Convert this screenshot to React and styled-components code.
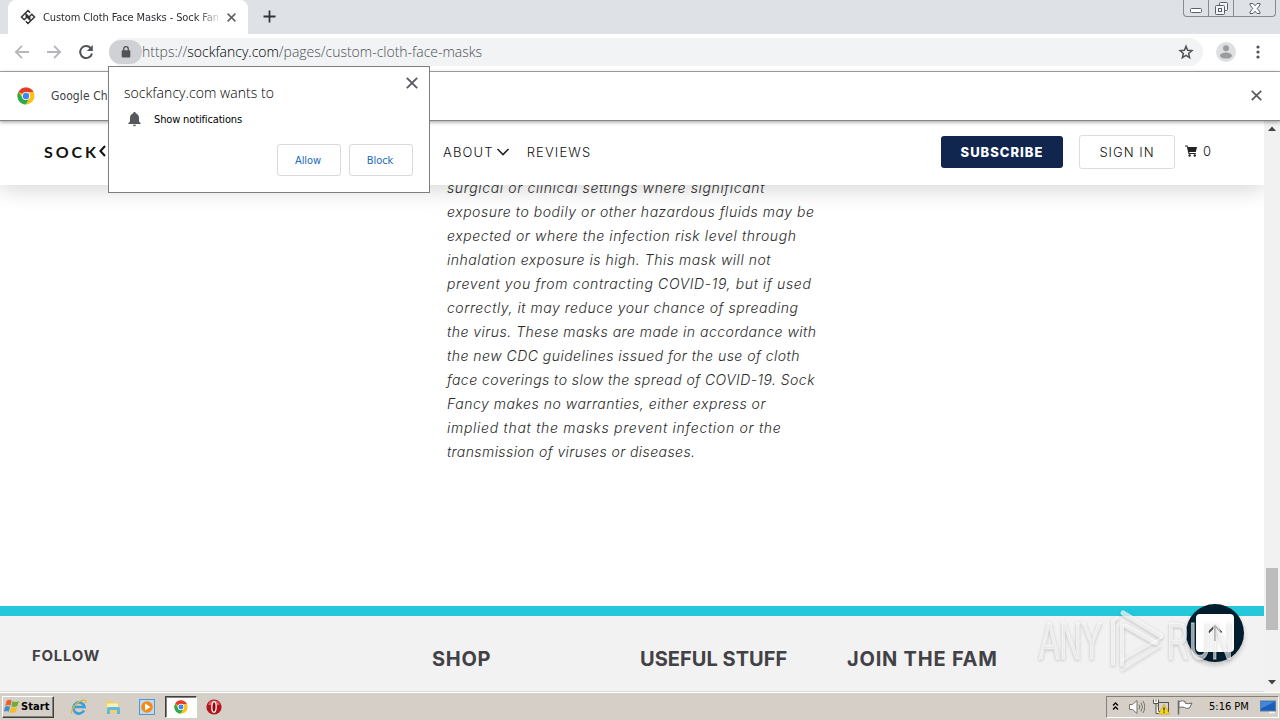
import React from 'react';
import styled, { createGlobalStyle } from 'styled-components';

const GlobalStyle = createGlobalStyle`
  * {
    box-sizing: border-box;
  }

  body {
    margin: 0;
    background: #fff;
    overflow: hidden;
  }

  svg {
    display: block;
    flex-shrink: 0;
  }
`;

const uiFont = '"DejaVu Sans Condensed", "DejaVu Sans", sans-serif';
const thinFont = '"Open Sans", sans-serif';
const siteFont = 'Inter, sans-serif';

const Screen = styled.div`
  position: relative;
  width: 1280px;
  height: 720px;
  display: grid;
  grid-template-rows: 34px 38px 49px 571px 28px;
  overflow: hidden;
  font-family: ${uiFont};
  white-space: nowrap;
`;

const TabStrip = styled.div`
  display: flex;
  align-items: flex-start;
  padding-left: 8px;
  background: #dee1e6;
`;

const Tab = styled.div`
  width: 240px;
  height: 34px;
  display: flex;
  align-items: center;
  padding: 0 11px 0 12px;
  background: #fff;
  border-radius: 8px 8px 0 0;
`;

const TabTitle = styled.div`
  width: 175px;
  margin-left: 7px;
  overflow: hidden;
  font-size: 11px;
  letter-spacing: -0.108px;
  color: #2c2f33;
  mask-image: linear-gradient(90deg, #000 154px, transparent 180px);
`;

const TabClose = styled.div`
  margin-left: 9px;
`;

const NewTab = styled.div`
  margin: 10px 0 0 15px;
`;

const WindowButtons = styled.div`
  display: flex;
  height: 17px;
  margin: 0 4px 0 auto;
  border: 1px solid #858a93;
  border-top: none;
  border-radius: 0 0 4px 4px;
`;

const WindowButton = styled.div`
  width: ${({ $width }) => $width}px;
  display: flex;
  align-items: center;
  justify-content: center;

  & + & {
    border-left: 1px solid #858a93;
  }
`;

const Toolbar = styled.div`
  display: flex;
  align-items: center;
  padding: 0 20px 1px 13px;
  background: #fff;
  border-bottom: 1px solid #a9a9ab;
`;

const NavIcons = styled.div`
  display: flex;
  gap: 14px;
  margin-right: 14px;
`;

const Omnibox = styled.div`
  flex: 1;
  height: 28px;
  display: flex;
  align-items: center;
  padding-right: 9px;
  background: #f1f3f4;
  border-radius: 14px;
`;

const LockPill = styled.div`
  width: 33px;
  height: 24px;
  display: flex;
  align-items: center;
  justify-content: center;
  background: #cfd1d4;
  border-radius: 12px;
`;

const Url = styled.div`
  flex: 1;
  padding-bottom: 2px;
  font: 300 14px ${thinFont};
  letter-spacing: -0.011px;
  color: #4c5054;

  span {
    color: #000;
  }
`;

const ToolbarIcon = styled.div`
  margin-left: ${({ $gap }) => $gap}px;
`;

const InfoBar = styled.div`
  position: relative;
  z-index: 3;
  display: flex;
  align-items: center;
  padding: 0 18px 1px 17px;
  background: #fff;
  border-bottom: 1px solid #858585;
  box-shadow: 0 1px 4px rgba(0, 0, 0, 0.4);
`;

const InfoText = styled.div`
  flex: 1;
  margin-left: 16px;
  font-size: 12px;
  letter-spacing: 0.1px;
  color: #3c4043;
`;

const Viewport = styled.div`
  display: grid;
  grid-template-columns: 1264px 16px;
  overflow: hidden;
`;

const Page = styled.div`
  display: flex;
  flex-direction: column;
  overflow: hidden;
  font-family: ${siteFont};
`;

const SiteHeader = styled.header`
  position: relative;
  z-index: 2;
  height: 64px;
  flex-shrink: 0;
  display: flex;
  align-items: center;
  padding: 0 53px 2px 44px;
  background: #fff;
  box-shadow: 0 4px 22px rgba(0, 0, 0, 0.17);
  color: #111;
`;

const Brand = styled.div`
  width: 399px;
  display: flex;
  align-items: center;
  padding-bottom: 2px;
  font: 700 16px Lato, sans-serif;
  letter-spacing: 2.9px;
  color: #111;
`;

const NavLink = styled.div`
  display: flex;
  align-items: center;
  margin-right: 17px;
  padding-bottom: 1px;
  font-size: 13px;
  font-weight: 300;
  letter-spacing: 1.15px;

  svg {
    margin-left: 2px;
  }
`;

const HeaderActions = styled.div`
  display: flex;
  align-items: center;
  margin-left: auto;
`;

const SiteButton = styled.div`
  width: ${({ $primary }) => ($primary ? 122 : 96)}px;
  height: ${({ $primary }) => ($primary ? 32 : 34)}px;
  display: flex;
  align-items: center;
  justify-content: center;
  margin-right: ${({ $primary }) => ($primary ? 16 : 10)}px;
  padding-bottom: 1px;
  font-size: 13px;
  font-weight: ${({ $primary }) => ($primary ? 800 : 300)};
  letter-spacing: 1px;
  color: ${({ $primary }) => ($primary ? '#fff' : '#111')};
  background: ${({ $primary }) => ($primary ? '#10264f' : '#fff')};
  border: ${({ $primary }) => ($primary ? 'none' : '1px solid #dcdde0')};
  border-radius: 3px;
`;

const Cart = styled.div`
  display: flex;
  align-items: center;
  gap: 6px;
  padding-bottom: 3px;
  font-size: 13px;
  font-weight: 300;
`;

const Article = styled.article`
  height: 430px;
  flex-shrink: 0;
  margin-top: -9px;
  padding-left: 447px;
  font-size: 14px;
  font-style: italic;
  font-weight: 300;
  line-height: 24px;
  color: #2a2a2a;
`;

const Line = styled.div`
  letter-spacing: ${({ $spacing }) => $spacing}px;
`;

const Footer = styled.footer`
  height: 86px;
  flex-shrink: 0;
  display: grid;
  grid-template-columns: 400px 208px 207px 1fr;
  align-items: center;
  padding: 4px 0 0 32px;
  background: #f2f2f2;
  border-top: 10px solid #25c8da;
  border-bottom: 1px solid #deddd8;
`;

const FooterHeading = styled.div`
  padding-top: ${({ $small }) => ($small ? 0 : 7)}px;
  font-family: ${siteFont};
  font-size: ${({ $small }) => ($small ? 15 : 20)}px;
  font-weight: 700;
  letter-spacing: ${({ $spacing }) => $spacing}px;
  color: #424246;
`;

const ScrollTrack = styled.div`
  display: flex;
  flex-direction: column;
  align-items: center;
  padding: 5px 0 7px;
  background: #f1f1f1;
`;

const ScrollThumb = styled.div`
  width: 12px;
  height: 62px;
  margin: auto 0 50px;
  background: #bcbcbc;
`;

const Prompt = styled.div`
  position: absolute;
  z-index: 5;
  left: 108px;
  top: 66px;
  width: 322px;
  height: 127px;
  padding: 10px 16px 16px 15px;
  display: flex;
  flex-direction: column;
  background: #fff;
  border: 1px solid #7e7e7e;
  color: #000;
`;

const PromptTop = styled.div`
  display: flex;
  justify-content: space-between;
  margin-right: -5px;
`;

const PromptTitle = styled.div`
  padding-top: 6px;
  font: 300 14px/20px ${thinFont};
  letter-spacing: 0.05px;
`;

const Permission = styled.div`
  display: flex;
  align-items: center;
  gap: 11px;
  padding: 8px 0 0 2px;
  font-size: 11px;
  letter-spacing: -0.147px;
`;

const PromptActions = styled.div`
  display: flex;
  justify-content: flex-end;
  gap: 8px;
  margin-top: auto;
`;

const PromptButton = styled.button`
  width: 64px;
  height: 32px;
  padding: 0 2px 0 0;
  font-family: ${uiFont};
  font-size: 11px;
  letter-spacing: -0.1px;
  color: #1a68c4;
  background: #fff;
  border: 1px solid #d8d9dc;
  border-radius: 3px;
`;

const BackToTop = styled.div`
  position: absolute;
  z-index: 4;
  left: 1186px;
  top: 604px;
  width: 58px;
  height: 58px;
  display: flex;
  align-items: center;
  justify-content: center;
  background: #021d2e;
  border-radius: 50%;
  box-shadow: 0 3px 5px rgba(0, 0, 0, 0.2);
`;

const TopSquare = styled.div`
  width: 38px;
  height: 38px;
  display: flex;
  align-items: center;
  justify-content: center;
  background: #fff;
  border-radius: 4px;
`;

const Watermark = styled.svg`
  position: absolute;
  z-index: 5;
  left: 1030px;
  top: 602px;
  filter: drop-shadow(0 1px 1.5px rgba(0, 0, 0, 0.3));
`;

const Taskbar = styled.div`
  display: flex;
  align-items: center;
  padding-left: 2px;
  background: #d5cfc7;
  border-top: 1px solid #fff;
  box-shadow: inset 0 1px 0 #d5d4cd;
`;

const StartButton = styled.div`
  width: 52px;
  height: 22px;
  display: flex;
  align-items: center;
  gap: 1px;
  padding-left: 1px;
  font-size: 11px;
  font-weight: 700;
  letter-spacing: 0.1px;
  color: #000;
  border: 1px solid;
  border-color: #fff #404040 #404040 #fff;
  box-shadow: inset -1px -1px 0 #858079;
`;

const Launchers = styled.div`
  display: flex;
  align-items: center;
  margin-left: 15px;
`;

const Launcher = styled.div`
  width: ${({ $width }) => $width || 34}px;
  height: 22px;
  display: flex;
  align-items: center;
  justify-content: center;
  ${({ $active }) =>
    $active &&
    `
    background: #fff;
    border: 1px solid;
    border-color: #404040 #fff #fff #404040;
    box-shadow: inset 1px 1px 0 #858079;
  `}
`;

const Tray = styled.div`
  width: 173px;
  height: 22px;
  display: flex;
  align-items: center;
  margin: 0 1px 0 auto;
  padding-left: 5px;
  border: 1px solid;
  border-color: #858079 #fff #fff #858079;
`;

const TrayIcon = styled.div`
  margin-right: ${({ $gap }) => $gap}px;
`;

const Clock = styled.div`
  width: 51px;
  font-size: 11px;
  color: #000;
`;

const LINES = [
  ['surgical or clinical settings where significant', 0.638],
  ['exposure to bodily or other hazardous fluids may be', 0.541],
  ['expected or where the infection risk level through', 0.583],
  ['inhalation exposure is high. This mask will not', 0.531],
  ['prevent you from contracting COVID-19, but if used', 0.638],
  ['correctly, it may reduce your chance of spreading', 0.541],
  ['the virus. These masks are made in accordance with', 0.487],
  ['the new CDC guidelines issued for the use of cloth', 0.483],
  ['face coverings to slow the spread of COVID-19. Sock', 0.456],
  ['Fancy makes no warranties, either express or', 0.515],
  ['implied that the masks prevent infection or the', 0.719],
  ['transmission of viruses or diseases.', 0.42],
];

const Cross = ({ size = 10, color = '#5a5d61' }) => (
  <svg width={size} height={size} viewBox="0 0 10 10" stroke={color} strokeWidth="1.6">
    <path d="M.7.7l8.6 8.6M9.3.7L.7 9.3" />
  </svg>
);

const Arrow = ({ flip }) => (
  <svg width="18" height="18" viewBox="0 0 18 18" fill="none" stroke="#b5b7ba" strokeWidth="1.8">
    <path d={flip ? 'M2 9h13M9 2.8L15.2 9 9 15.2' : 'M16 9H3M9 2.8L2.8 9 9 15.2'} />
  </svg>
);

const ChromeLogo = ({ size }) => (
  <svg width={size} height={size} viewBox="0 0 18 18">
    <circle cx="9" cy="9" r="8.5" fill="#fbc116" />
    <path d="M9 9L1.6 4.7A8.5 8.5 0 0 1 16.5 5H9z" fill="#e33b2e" />
    <path d="M1.6 4.7A8.5 8.5 0 0 0 8.7 17.5L12.4 11 9 9 5.5 11z" fill="#2da94f" />
    <circle cx="9" cy="9" r="4.1" fill="#fff" />
    <circle cx="9" cy="9" r="3.2" fill="#4285f4" />
  </svg>
);

const ScrollArrow = ({ down }) => (
  <svg width="8" height="5" viewBox="0 0 8 5" fill="#444">
    <path d={down ? 'M0 0h8L4 4.5z' : 'M0 5h8L4 .5z'} />
  </svg>
);

const BrowserTabs = () => (
  <TabStrip>
    <Tab>
      <svg width="16" height="16" viewBox="0 0 16 16" fill="none" stroke="#333" strokeWidth="1.5">
        <path d="M10.200 3.700L8 1.500 1.500 8l2.700 2.700L8 7M5.800 12.300L8 14.500 14.500 8l-2.700-2.700L8 9M5.500 6.500l4.800 4.600M5.700 4.900l4.800 4.600" />
      </svg>
      <TabTitle>Custom Cloth Face Masks - Sock Fan</TabTitle>
      <TabClose>
        <Cross size={9} />
      </TabClose>
    </Tab>
    <NewTab>
      <svg width="13" height="13" viewBox="0 0 13 13" stroke="#333539" strokeWidth="1.8">
        <path d="M6.5.5v12M.5 6.500h12" />
      </svg>
    </NewTab>
    <WindowButtons>
      <WindowButton $width={24}>
        <svg width="13" height="16" fill="#fff" stroke="#5a5f6a">
          <rect x=".5" y="8.500" width="11" height="4" rx="1" />
        </svg>
      </WindowButton>
      <WindowButton $width={25}>
        <svg width="13" height="13" fill="#f4f5f7" stroke="#5a5f6a">
          <rect x="4.500" y=".5" width="8" height="8" rx="1" />
          <rect x=".5" y="3.500" width="9" height="9" rx="1" />
          <rect x="3.500" y="6.500" width="3" height="3" />
        </svg>
      </WindowButton>
      <WindowButton $width={42}>
        <svg width="12" height="11" viewBox="0 0 12 11" fill="#fff" stroke="#5a5f6a">
          <path d="M1 .5h3l2 2.300 2-2.300h3v1.500L8.200 5.500 11 9v1.500H8L6 8.200 4 10.500H1V9l2.800-3.500L1 2z" />
        </svg>
      </WindowButton>
    </WindowButtons>
  </TabStrip>
);

const AddressBar = () => (
  <Toolbar>
    <NavIcons>
      <Arrow />
      <Arrow flip />
      <svg width="18" height="18" viewBox="0 0 18 18" fill="none" stroke="#505357" strokeWidth="2">
        <path d="M13.600 5A6 6 0 1 0 15 10.500" />
        <path d="M15.800 2v6h-6z" fill="#505357" stroke="none" />
      </svg>
    </NavIcons>
    <Omnibox>
      <LockPill>
        <svg width="10" height="12" viewBox="0 0 10 12">
          <path d="M2.700 5V3a2.300 2.300 0 0 1 4.600 0v2" fill="none" stroke="#505256" strokeWidth="1.300" />
          <rect x=".7" y="4.300" width="8.600" height="7.200" rx="1" fill="#505256" />
        </svg>
      </LockPill>
      <Url>
        https://<span>sockfancy.com</span>/pages/custom-cloth-face-masks
      </Url>
      <svg width="16" height="16" viewBox="0 0 16 16" fill="none" stroke="#505357" strokeWidth="1.500">
        <path d="M8 2.200l1.600 4 4.300.3-3.300 2.900 1 4.200L8 11.400l-3.600 2.200 1-4.200-3.300-2.900 4.300-.3z" />
      </svg>
    </Omnibox>
    <ToolbarIcon $gap={13}>
      <svg width="20" height="20" viewBox="0 0 20 20">
        <circle cx="10" cy="10" r="10" fill="#dedfe1" />
        <circle cx="10" cy="6.300" r="3" fill="#9a9c9f" />
        <ellipse cx="10" cy="13.600" rx="6" ry="3" fill="#9a9c9f" />
      </svg>
    </ToolbarIcon>
    <ToolbarIcon $gap={20}>
      <svg width="4" height="14" viewBox="0 0 4 14" fill="#505357">
        <circle cx="2" cy="2" r="1.600" />
        <circle cx="2" cy="7" r="1.600" />
        <circle cx="2" cy="12" r="1.600" />
      </svg>
    </ToolbarIcon>
  </Toolbar>
);

const Header = () => (
  <SiteHeader>
    <Brand>
      SOCK
      <svg width="14" height="16" viewBox="0 0 14 16" fill="none" stroke="#111" strokeWidth="2">
        <path d="M6 3L1.400 8 6 13" />
      </svg>
    </Brand>
    <NavLink>
      ABOUT
      <svg width="14" height="10" viewBox="0 0 14 10" fill="none" stroke="#222" strokeWidth="1.600">
        <path d="M1.500 2L7 7.500 12.500 2" />
      </svg>
    </NavLink>
    <NavLink>REVIEWS</NavLink>
    <HeaderActions>
      <SiteButton $primary>SUBSCRIBE</SiteButton>
      <SiteButton>SIGN IN</SiteButton>
      <Cart>
        <svg width="12" height="12" viewBox="0 0 12 12" fill="#222">
          <path d="M0 .5h2.500l.4 1.500H12l-1.200 5H4.200l.2 1h6.400v1H3.500L1.800 1.500H0z" />
          <circle cx="4.600" cy="10.500" r="1.200" />
          <circle cx="9.800" cy="10.500" r="1.200" />
        </svg>
        0
      </Cart>
    </HeaderActions>
  </SiteHeader>
);

const NotificationPrompt = () => (
  <Prompt>
    <PromptTop>
      <PromptTitle>sockfancy.com wants to</PromptTitle>
      <Cross size={12} />
    </PromptTop>
    <Permission>
      <svg width="17" height="16" viewBox="0 0 17 16" fill="#55585c">
        <path d="M8.500 1c.8 0 1.200.5 1.200 1.200C11.800 2.800 13 4.500 13 6.700v3.800l1.600 1.600v.9H2.400v-.9L4 10.500V6.700c0-2.200 1.200-3.900 3.300-4.500C7.300 1.500 7.700 1 8.500 1z" />
        <path d="M7 13.700h3c0 .9-.6 1.500-1.500 1.500S7 14.600 7 13.700z" />
      </svg>
      Show notifications
    </Permission>
    <PromptActions>
      <PromptButton>Allow</PromptButton>
      <PromptButton>Block</PromptButton>
    </PromptActions>
  </Prompt>
);

const AnyRunMark = () => (
  <Watermark width="225" height="80" viewBox="0 0 225 80">
    <g
      fill="#fff"
      fillOpacity=".6"
      stroke="#fff"
      strokeOpacity=".45"
      strokeWidth="1.4"
      fontFamily="Liberation Sans, sans-serif"
      fontSize="51"
    >
      <text x="9" y="57" textLength="63" lengthAdjust="spacingAndGlyphs">
        ANY
      </text>
      <text x="137" y="57" textLength="66" lengthAdjust="spacingAndGlyphs">
        RUN
      </text>
    </g>
    <g fill="none" stroke="#fff" strokeOpacity=".7" strokeLinejoin="round" strokeLinecap="round">
      <path d="M83 62V19l4-3M92 23v40" strokeWidth="4" />
      <path d="M93 11l38 23M96 24l30 17" strokeWidth="5" />
      <path d="M93 58l38-22M92 68l38-24" strokeWidth="3" strokeOpacity=".5" />
    </g>
  </Watermark>
);

const SystemTaskbar = () => (
  <Taskbar>
    <StartButton>
      <svg width="16" height="15" viewBox="0 0 15 14">
        <path d="M2.500 1.500C4.500.3 6 .7 7.200 1.600L6 6.300C4.500 5.300 3 5.400 1.200 6.300z" fill="#e8602c" />
        <path d="M8 2c2 1 3.800.9 6-.2l-1.400 4.800c-2 1-3.900 1-5.800.1z" fill="#6fae35" />
        <path d="M1 7.200c1.800-1 3.300-.9 4.700 0l-1.300 4.700c-1.400-1-3-1-4.700-.1z" fill="#3f8fd0" />
        <path d="M6.600 7.500c2 1 3.700.9 5.800-.1L11 12.200c-2 1-3.900 1-5.800.1z" fill="#f4bd27" />
      </svg>
      Start
    </StartButton>
    <Launchers>
      <Launcher $width={20}>
        <svg width="18" height="18" viewBox="0 0 18 18" fill="none">
          <path d="M14 12.500A5.600 5.600 0 1 1 14.500 9H5" stroke="#3aa0dc" strokeWidth="2.600" />
          <path d="M2 15.500C-.5 13 6 4 13 2.200c3-.7 3.500 1 2.500 3" stroke="#e6b62c" strokeWidth="1.300" />
        </svg>
      </Launcher>
      <Launcher $width={48}>
        <svg width="16" height="16" viewBox="0 0 16 16">
          <path d="M1 2h5l1 1.500h7V14H1z" fill="#efd069" />
          <path d="M2 4.500h11v5H2z" fill="#fbf0b5" />
          <path d="M2 15V9.500q0-1.500 1.500-1.500h10q1.500 0 1.500 1.500V15h-3v-4H5v4z" fill="#60b9e4" />
        </svg>
      </Launcher>
      <Launcher $width={20}>
        <svg width="16" height="16" viewBox="0 0 16 16">
          <rect x=".5" y=".5" width="15" height="15" fill="#bcdcf3" stroke="#5297cf" />
          <circle cx="8" cy="8" r="5.800" fill="#f58a16" />
          <path d="M6 4.500v7L11.500 8z" fill="#fff" />
        </svg>
      </Launcher>
      <Launcher $width={8} />
      <Launcher $width={32} $active>
        <ChromeLogo size={14} />
      </Launcher>
      <Launcher $width={34}>
        <svg width="16" height="16" viewBox="0 0 16 16">
          <circle cx="8" cy="8" r="7.600" fill="#b5121b" />
          <path d="M2 6a6.300 6.300 0 0 1 12 0" fill="#dc5c5e" />
          <ellipse cx="8" cy="8" rx="2.200" ry="5.300" fill="#8c0a10" stroke="#fff" strokeWidth="1.300" />
        </svg>
      </Launcher>
    </Launchers>
    <Tray>
      <TrayIcon $gap={10}>
        <svg width="7" height="9" viewBox="0 0 7 9" fill="none" stroke="#000" strokeWidth="1.300">
          <path d="M1 3.500L3.500 1 6 3.500M1 7.500L3.500 5 6 7.500" />
        </svg>
      </TrayIcon>
      <TrayIcon $gap={8}>
        <svg width="16" height="16" viewBox="0 0 16 16" fill="#fff" stroke="#77736e">
          <path d="M.5 5.500h3L8 1.500v13l-4.500-4h-3z" />
          <path d="M10 5.500q1.500 2.500 0 5M12 3.500q3 4.500 0 9M14 2q3.500 6 0 12" fill="none" />
        </svg>
      </TrayIcon>
      <TrayIcon $gap={7}>
        <svg width="17" height="16" viewBox="0 0 17 16">
          <rect x="5.500" y="3.500" width="10" height="9" fill="#d6d3ce" stroke="#55524e" />
          <path d="M.5.5v4h5v-4M3 4.500v10h3M3 .5v2" fill="#fff" stroke="#55524e" />
          <path d="M11 5.500l5.500 9.500h-11z" fill="#ffd91c" stroke="#bd9600" strokeWidth=".6" />
          <path d="M11 8.500v3M11 12.500v1.200" stroke="#222" strokeWidth="1.300" />
        </svg>
      </TrayIcon>
      <TrayIcon $gap={16}>
        <svg width="16" height="16" viewBox="0 0 16 16" fill="#fff" stroke="#6b6864">
          <path d="M1.500 15.500v-14" strokeWidth="1.500" />
          <path d="M2 2.500q3.500-1.500 6 0v1.500q3 1.500 7 0l-2.500 5q-3 1.200-5-.5-3-1-5.500 0z" />
        </svg>
      </TrayIcon>
      <Clock>5:16 PM</Clock>
      <svg width="16" height="14" viewBox="0 0 16 14">
        <rect x=".5" y="1" width="15" height="10" fill="#1d5fb8" stroke="#5a7fa8" />
        <path d="M1 1.500h14L1 8.500z" fill="#3f8adb" />
        <path d="M9 12.500h6" stroke="#f4f4f4" strokeWidth="1.500" />
      </svg>
    </Tray>
  </Taskbar>
);

const App = () => {
  return (
    <>
      <GlobalStyle />
      <Screen>
        <BrowserTabs />
        <AddressBar />
        <InfoBar>
          <ChromeLogo size={18} />
          <InfoText>Google Ch</InfoText>
          <Cross size={11} />
        </InfoBar>
        <Viewport>
          <Page>
            <Header />
            <Article>
              {LINES.map(([text, spacing]) => (
                <Line key={text} $spacing={spacing}>
                  {text}
                </Line>
              ))}
            </Article>
            <Footer>
              <FooterHeading $small $spacing={0.72}>
                FOLLOW
              </FooterHeading>
              <FooterHeading $spacing={0.7}>SHOP</FooterHeading>
              <FooterHeading $spacing={0.03}>USEFUL STUFF</FooterHeading>
              <FooterHeading $spacing={0.78}>JOIN THE FAM</FooterHeading>
            </Footer>
          </Page>
          <ScrollTrack>
            <ScrollArrow />
            <ScrollThumb />
            <ScrollArrow down />
          </ScrollTrack>
        </Viewport>
        <SystemTaskbar />
        <NotificationPrompt />
        <BackToTop>
          <TopSquare>
            <svg width="16" height="18" viewBox="0 0 16 18" fill="none" stroke="#555" strokeWidth="2">
              <path d="M8 17V2M1.500 8.500L8 2l6.500 6.500" />
            </svg>
          </TopSquare>
        </BackToTop>
        <AnyRunMark />
      </Screen>
    </>
  );
};

export default App;
